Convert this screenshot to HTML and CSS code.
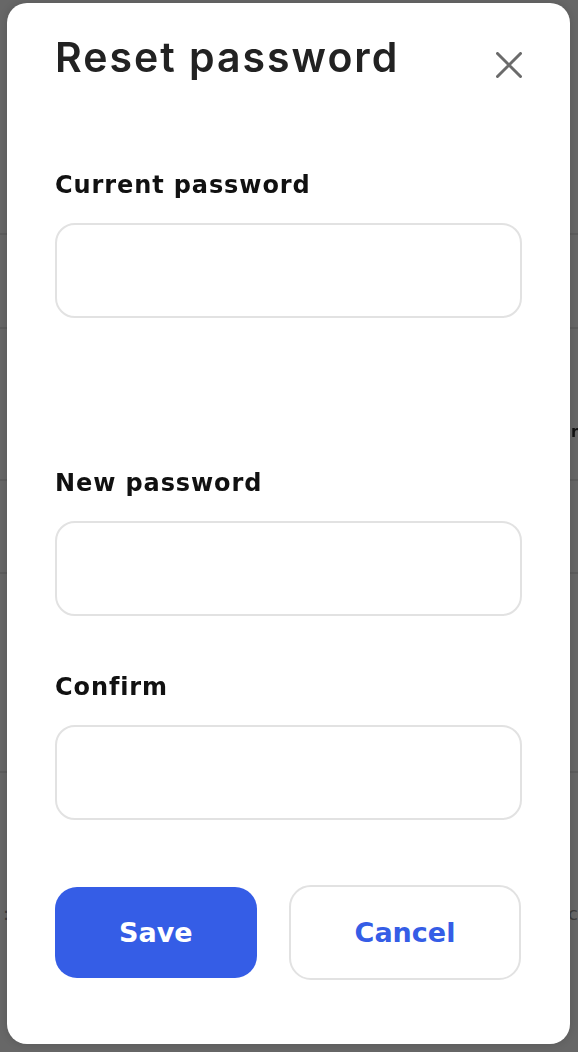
FILE: index.html
```html
<!DOCTYPE html>
<html lang="en">
<head>
  <meta charset="UTF-8" />
  <meta name="viewport" content="width=device-width, initial-scale=1.0" />
  <title>Reset password</title>
  <link rel="stylesheet" href="styles.css">
</head>
<body>
  <!-- page behind the dialog -->
  <div class="page">
    <div class="page-row r1"></div>
    <div class="page-row r2"></div>
    <div class="page-row r3"></div>
    <div class="page-row r4"></div>
    <div class="page-row r5"></div>
    <div class="page-row r6"><span>:</span><span>c</span></div>
  </div>

  <div class="overlay">
    <div class="modal">
      <div class="modal-head">
        <h1>Reset password</h1>
        <button class="close" aria-label="Close">
          <svg width="26" height="26" viewBox="0 0 26 26">
            <path d="M1.5 1.5 L24.5 24.5 M24.5 1.5 L1.5 24.5" stroke="#6b6b6b" stroke-width="3" stroke-linecap="round" fill="none"/>
          </svg>
        </button>
      </div>

      <div class="field first">
        <label for="current">Current password</label>
        <input type="password" id="current" />
        <span class="stray">r</span>
      </div>

      <div class="field gap-big">
        <label for="nuevo">New password</label>
        <input type="password" id="nuevo" />
      </div>

      <div class="field">
        <label for="confirm">Confirm</label>
        <input type="password" id="confirm" />
      </div>

      <div class="actions">
        <button class="btn btn-save">Save</button>
        <button class="btn btn-cancel">Cancel</button>
      </div>
    </div>
  </div>
</body>
</html>
```

FILE: styles.css
```css
html, body {
  margin: 0;
  height: 100%;
}
body {
  font-family: "DejaVu Sans", "Noto Sans", sans-serif;
  background: #676767;
  overflow: hidden;
}
.page-row {
  border-bottom: 2px solid #5d5d5d;
}
.r1 { height: 233px; }
.r2 { height: 92px; }
.r3 { height: 150px; }
.r4 { height: 91px; }
.r5 { height: 197px; }
.r6 {
  display: flex;
  justify-content: space-between;
  padding: 130px 0 0 3px;
  color: #3c3c3c;
  font-size: 18px;
  border: none;
}
.overlay {
  position: fixed;
  inset: 0;
  padding: 3px 8px 0 7px;
}
.modal {
  position: relative;
  background: #fff;
  border-radius: 20px;
  padding: 30px 48px 64px;
  box-shadow: 0 0 8px rgba(0,0,0,0.15);
}
.modal-head {
  display: flex;
  justify-content: space-between;
  align-items: flex-start;
}
h1 {
  margin: 0;
  font-family: "Inter", "Lato", sans-serif;
  font-size: 41px;
  line-height: 48px;
  font-weight: 600;
  letter-spacing: 2px;
  color: #222;
}
.close {
  border: none;
  background: none;
  padding: 0;
  margin-top: 19px;
  width: 26px;
  height: 26px;
  cursor: pointer;
}
.close svg {
  display: block;
}
.field {
  margin-top: 56px;
  position: relative;
}
.field.first {
  margin-top: 89px;
}
.field.gap-big {
  margin-top: 150px;
}
label {
  display: block;
  font-size: 24px;
  line-height: 30px;
  font-weight: 700;
  color: #111;
  letter-spacing: 0.9px;
  margin-bottom: 23px;
}
input {
  display: block;
  width: 100%;
  height: 95px;
  box-sizing: border-box;
  border: 2px solid #e2e2e2;
  border-radius: 20px;
  padding: 0 20px;
  font-size: 20px;
  outline: none;
}
.stray {
  position: absolute;
  left: 516px;
  top: 253px;
  font-size: 15px;
  font-weight: 700;
  color: #111;
}
.actions {
  display: flex;
  gap: 32px;
  align-items: center;
  margin-top: 65px;
}
.btn {
  font-family: inherit;
  font-size: 27px;
  font-weight: 700;
  border-radius: 22px;
  padding: 0 64px;
  cursor: pointer;
}
.btn-save {
  height: 91px;
  border: none;
  background: #355de6;
  color: #fff;
}
.btn-cancel {
  height: 95px;
  border: 2px solid #e2e2e2;
  background: #fff;
  color: #355de6;
}
```
